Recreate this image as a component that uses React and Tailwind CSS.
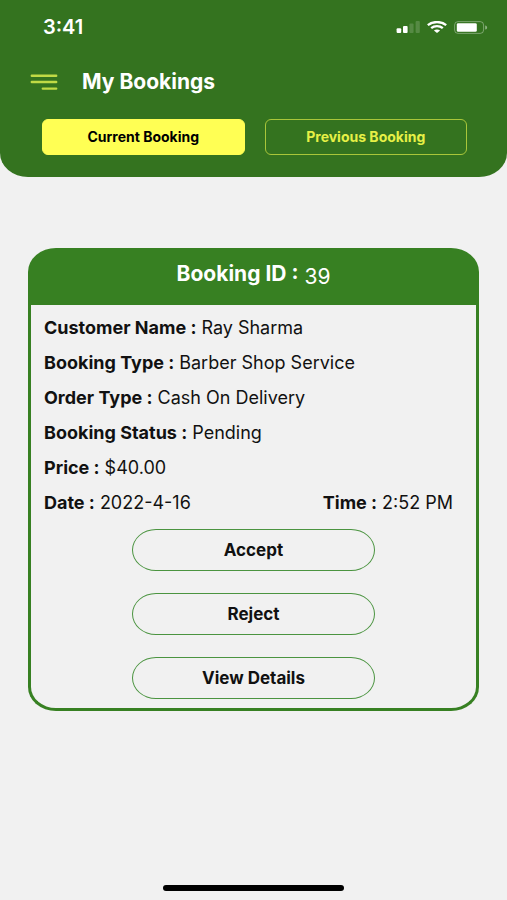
import { useState } from 'react';

const details = [
  { label: 'Customer Name', value: 'Ray Sharma' },
  { label: 'Booking Type', value: 'Barber Shop Service' },
  { label: 'Order Type', value: 'Cash On Delivery' },
  { label: 'Booking Status', value: 'Pending' },
  { label: 'Price', value: '$40.00' },
];

const actions = ['Accept', 'Reject', 'View Details'];

function StatusBar() {
  return (
    <div className="flex h-[54px] items-center justify-between pl-[43px] pr-[19px]">
      <span className="text-xl font-semibold">3:41</span>
      <div className="flex items-center gap-[7px]">
        <svg className="h-3 w-6" viewBox="0 0 24 12" fill="#fff" aria-hidden="true">
          <rect x="0.6" y="7.3" width="4.6" height="4.7" rx="1" />
          <rect x="7" y="5" width="4.6" height="7" rx="1" />
          <rect x="13.4" y="2.5" width="4.2" height="9.5" rx="1" opacity="0.17" />
          <rect x="19.6" y="0" width="4.2" height="12" rx="1" opacity="0.17" />
        </svg>
        <svg className="h-3 w-5" viewBox="0 0 20 12" fill="none" stroke="#fff" strokeWidth="2.3" aria-hidden="true">
          <path d="M0.8 4.1 C5.8 0 14.2 0 19.2 4.1" />
          <path d="M4.2 7.2 C7.4 4.3 12.6 4.3 15.8 7.2" />
          <path d="M10 12 L6.9 9.5 C8.6 8 11.4 8 13.1 9.5 Z" fill="#fff" stroke="none" />
        </svg>
        <svg className="h-[13px] w-[34px]" viewBox="0 0 34 13" aria-hidden="true">
          <rect x="0.6" y="0.6" width="29" height="11.8" rx="3.4" fill="none" stroke="#fff" strokeOpacity="0.35" />
          <rect x="2.8" y="2.2" width="20" height="8.6" rx="1.4" fill="#fff" />
          <path d="M31.2 4.4 C33.8 5 33.8 8 31.2 8.6 Z" fill="#fff" fillOpacity="0.45" />
        </svg>
      </div>
    </div>
  );
}

function Field({ label, value }) {
  return (
    <p className="flex h-[35px] items-center gap-[5px] whitespace-nowrap">
      <span className="font-bold">{label} :</span>
      <span>{value}</span>
    </p>
  );
}

export default function App() {
  const [tab, setTab] = useState('current');

  function tabClass(name) {
    return tab === name
      ? 'border-[#ffff54] bg-[#ffff54] text-black'
      : 'border-[#a9c63a] text-[#e6f046]';
  }

  return (
    <div className="flex min-h-screen flex-col bg-[#f1f1f1] font-['Inter',sans-serif] text-[#111]">
      <header className="rounded-b-[28px_24px] bg-[#34731f] pb-[22px] text-white">
        <StatusBar />
        <div className="flex h-[56px] items-center gap-6 pl-[30px]">
          <button type="button" aria-label="Menu">
            <svg className="h-[17px] w-7" viewBox="0 0 28 17" stroke="#c0da45" strokeWidth="2.4" strokeLinecap="round">
              <path d="M1.8 1.8 H26.2 M1.8 8 H26.2 M12.8 14.6 H26.2" />
            </svg>
          </button>
          <h1 className="text-[21px] font-bold">My Bookings</h1>
        </div>
        <nav className="mt-[9px] flex gap-5 pl-[42px] pr-10">
          <button type="button" onClick={() => setTab('current')} className={`h-9 flex-1 rounded-md border text-sm font-bold ${tabClass('current')}`}>
            Current Booking
          </button>
          <button type="button" onClick={() => setTab('previous')} className={`h-9 flex-1 rounded-md border text-sm font-bold ${tabClass('previous')}`}>
            Previous Booking
          </button>
        </nav>
      </header>

      <main className="px-7 pt-[71px]">
        <section className="text-lg">
          <h2 className="flex h-[57px] items-start justify-center gap-[6px] rounded-t-[28px_24px] bg-[#378022] pt-[15px] text-[21px] text-white">
            <span className="font-bold leading-[22px]">Booking ID :</span>
            <span className="leading-7">39</span>
          </h2>
          <div className="rounded-b-[28px_24px] border-x-3 border-b-3 border-[#378022] px-[13px] pb-[9px] pt-[5px]">
            {details.map((item) => (
              <Field key={item.label} label={item.label} value={item.value} />
            ))}
            <div className="flex justify-between pr-[10px]">
              <Field label="Date" value="2022-4-16" />
              <Field label="Time" value="2:52 PM" />
            </div>
            <div className="mt-[9px] flex flex-col items-center gap-[22px]">
              {actions.map((action) => (
                <button key={action} type="button" className="h-[42px] w-[243px] rounded-[24px/21px] border border-[#4b9440] text-[17px] font-bold">
                  {action}
                </button>
              ))}
            </div>
          </div>
        </section>
      </main>

      <div className="mt-auto flex justify-center pb-[9px]">
        <div className="h-[6px] w-[181px] rounded-full bg-black" />
      </div>
    </div>
  );
}
